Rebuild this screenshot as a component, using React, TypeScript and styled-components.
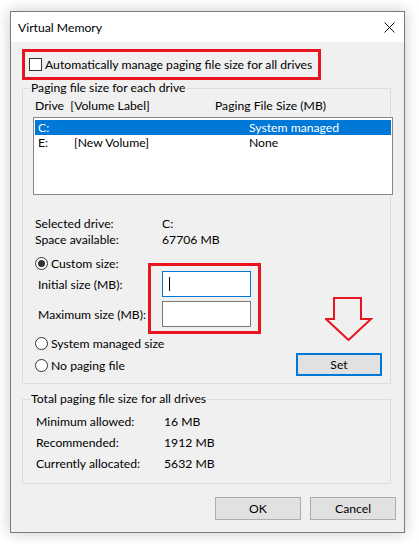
import styled, { createGlobalStyle } from 'styled-components'

const GlobalStyle = createGlobalStyle`
  html, body {
    margin: 0;
    padding: 0;
    background: #ffffff;
  }
  body {
    font-family: Lato, "Noto Sans", "Liberation Sans", sans-serif;
    font-size: 12.2px;
    color: #000;
  }
`

const RED = '#e8141f'

const Page = styled.div`
  padding: 11px 0 0 10px;
  width: 419px;
  height: 544px;
  box-sizing: border-box;
`

const Window = styled.div`
  width: 395px;
  box-sizing: border-box;
  border: 1px solid #7c7c7c;
  background: #f0f0f0;
  box-shadow: 0 0 14px rgba(0, 0, 0, 0.22);
`

const TitleBar = styled.div`
  height: 30px;
  background: #fff;
  display: flex;
  align-items: center;
  justify-content: space-between;
  padding: 0 9px 0 7px;
`

const Body = styled.div`
  padding: 7px 8px 12px 11px;
`

const AutoBox = styled.div`
  width: 299px;
  height: 31px;
  box-sizing: border-box;
  border: 3px solid ${RED};
  display: flex;
  align-items: center;
  gap: 3px;
  padding-left: 4px;
  white-space: nowrap;
`

const CheckBox = styled.span`
  width: 13px;
  height: 13px;
  flex: none;
  box-sizing: border-box;
  border: 1px solid #333;
  background: #fff;
`

const Group = styled.fieldset<{ $bottom: number; $top?: number }>`
  margin: ${p => p.$top ?? 0}px 0 0 0;
  width: 369px;
  box-sizing: border-box;
  border: 1px solid #dcdcdc;
  padding: 0 0 ${p => p.$bottom}px 7px;
  min-width: 0;
`

const Legend = styled.legend`
  padding: 0 1px;
  line-height: 16px;
`

const HeaderRow = styled.div`
  margin: 2px 0 0 5px;
  line-height: 16px;
  display: grid;
  grid-template-columns: 180px auto;
`

const List = styled.div`
  margin: 3px 0 0 3px;
  width: 360px;
  height: 78px;
  box-sizing: border-box;
  border: 1px solid #828790;
  background: #fff;
  padding: 2px 1px;
`

const ListRow = styled.div<{ $selected?: boolean }>`
  height: 15px;
  line-height: 15px;
  padding-left: 3px;
  display: grid;
  grid-template-columns: 36px 175px auto;
  background: ${p => (p.$selected ? '#0078d7' : 'transparent')};
  color: ${p => (p.$selected ? '#fff' : '#000')};
`

const InfoTable = styled.div<{ $top: number; $left: number; $row: number; $col: number }>`
  margin: ${p => p.$top}px 0 0 ${p => p.$left}px;
  display: grid;
  grid-template-columns: ${p => p.$col}px auto;
  grid-auto-rows: ${p => p.$row}px;
  align-items: center;
`

const SizeSection = styled.div`
  margin-top: 8px;
  display: flex;
  padding-left: 5px;
`

const LeftCol = styled.div`
  width: 261px;
  display: flex;
  flex-direction: column;
`

const RadioRow = styled.label<{ $top?: number }>`
  display: flex;
  align-items: center;
  gap: 3px;
  height: 16px;
  margin-top: ${p => p.$top ?? 0}px;
`

const Radio = styled.span<{ $checked?: boolean }>`
  width: 13px;
  height: 13px;
  box-sizing: border-box;
  border: 1px solid #333;
  border-radius: 50%;
  background: #fff;
  display: flex;
  align-items: center;
  justify-content: center;
  &::after {
    content: '';
    width: 7px;
    height: 7px;
    border-radius: 50%;
    background: ${p => (p.$checked ? '#333' : 'transparent')};
  }
`

const InputsWrap = styled.div`
  position: relative;
  display: flex;
  flex-direction: column;
  gap: 4px;
`

const InputRow = styled.div`
  display: flex;
  align-items: center;
  padding-left: 3px;
`

const InputLabel = styled.span`
  width: 124px;
`

const TextInput = styled.div<{ $focused?: boolean }>`
  width: 89px;
  height: 26px;
  box-sizing: border-box;
  border: 1px solid ${p => (p.$focused ? '#0078d7' : '#7a7a7a')};
  background: #fff;
  display: flex;
  align-items: center;
  padding-left: 6px;
`

const Caret = styled.span`
  width: 1px;
  height: 14px;
  background: #000;
`

const Annotation = styled.div`
  position: absolute;
  left: 113px;
  top: -8px;
  width: 113px;
  height: 71px;
  box-sizing: border-box;
  border: 3px solid ${RED};
  pointer-events: none;
`

const RightCol = styled.div`
  display: flex;
  flex-direction: column;
  padding-top: 42px;
`

const Arrow = styled.svg`
  display: block;
  margin-left: 29px;
`

const Button = styled.div<{ $default?: boolean; $top?: number }>`
  width: 86px;
  height: 23px;
  box-sizing: border-box;
  margin-top: ${p => p.$top ?? 0}px;
  border: ${p => (p.$default ? '2px solid #0078d7' : '1px solid #adadad')};
  background: #e1e1e1;
  display: flex;
  align-items: center;
  justify-content: center;
`

const Footer = styled.div`
  margin-top: 13px;
  display: flex;
  justify-content: flex-end;
  gap: 9px;
`

export default function App() {
  return (
    <>
      <GlobalStyle />
      <Page>
        <Window>
          <TitleBar>
            <span>Virtual Memory</span>
            <svg width="11" height="11" viewBox="0 0 11 11">
              <path d="M0.5 0.5 L10.5 10.5 M10.5 0.5 L0.5 10.5" stroke="#111" strokeWidth="1" />
            </svg>
          </TitleBar>
          <Body>
            <AutoBox>
              <CheckBox />
              <span>Automatically manage paging file size for all drives</span>
            </AutoBox>

            <Group $bottom={7}>
              <Legend>Paging file size for each drive</Legend>
              <HeaderRow>
                <span>Drive&nbsp; [Volume Label]</span>
                <span>Paging File Size (MB)</span>
              </HeaderRow>
              <List>
                <ListRow $selected>
                  <span>C:</span>
                  <span></span>
                  <span>System managed</span>
                </ListRow>
                <ListRow>
                  <span>E:</span>
                  <span>[New Volume]</span>
                  <span>None</span>
                </ListRow>
              </List>

              <InfoTable $top={20} $left={5} $row={16} $col={127}>
                <span>Selected drive:</span>
                <span>C:</span>
                <span>Space available:</span>
                <span>67706 MB</span>
              </InfoTable>

              <SizeSection>
                <LeftCol>
                  <RadioRow>
                    <Radio $checked />
                    <span>Custom size:</span>
                  </RadioRow>
                  <InputsWrap>
                    <InputRow>
                      <InputLabel>Initial size (MB):</InputLabel>
                      <TextInput $focused>
                        <Caret />
                      </TextInput>
                    </InputRow>
                    <InputRow>
                      <InputLabel>Maximum size (MB):</InputLabel>
                      <TextInput />
                    </InputRow>
                    <Annotation />
                  </InputsWrap>
                  <RadioRow $top={8}>
                    <Radio />
                    <span>System managed size</span>
                  </RadioRow>
                  <RadioRow $top={6}>
                    <Radio />
                    <span>No paging file</span>
                  </RadioRow>
                </LeftCol>
                <RightCol>
                  <Arrow width="48" height="44" viewBox="0 0 48 44">
                    <path
                      d="M9 1 H36 V22 H46 L23.5 43 L1 22 H9 Z"
                      fill="none"
                      stroke={RED}
                      strokeWidth="2"
                    />
                  </Arrow>
                  <Button $default $top={12}>Set</Button>
                </RightCol>
              </SizeSection>
            </Group>

            <Group $bottom={9} $top={7}>
              <Legend>Total paging file size for all drives</Legend>
              <InfoTable $top={4} $left={6} $row={21} $col={128}>
                <span>Minimum allowed:</span>
                <span>16 MB</span>
                <span>Recommended:</span>
                <span>1912 MB</span>
                <span>Currently allocated:</span>
                <span>5632 MB</span>
              </InfoTable>
            </Group>

            <Footer>
              <Button>OK</Button>
              <Button>Cancel</Button>
            </Footer>
          </Body>
        </Window>
      </Page>
    </>
  )
}
